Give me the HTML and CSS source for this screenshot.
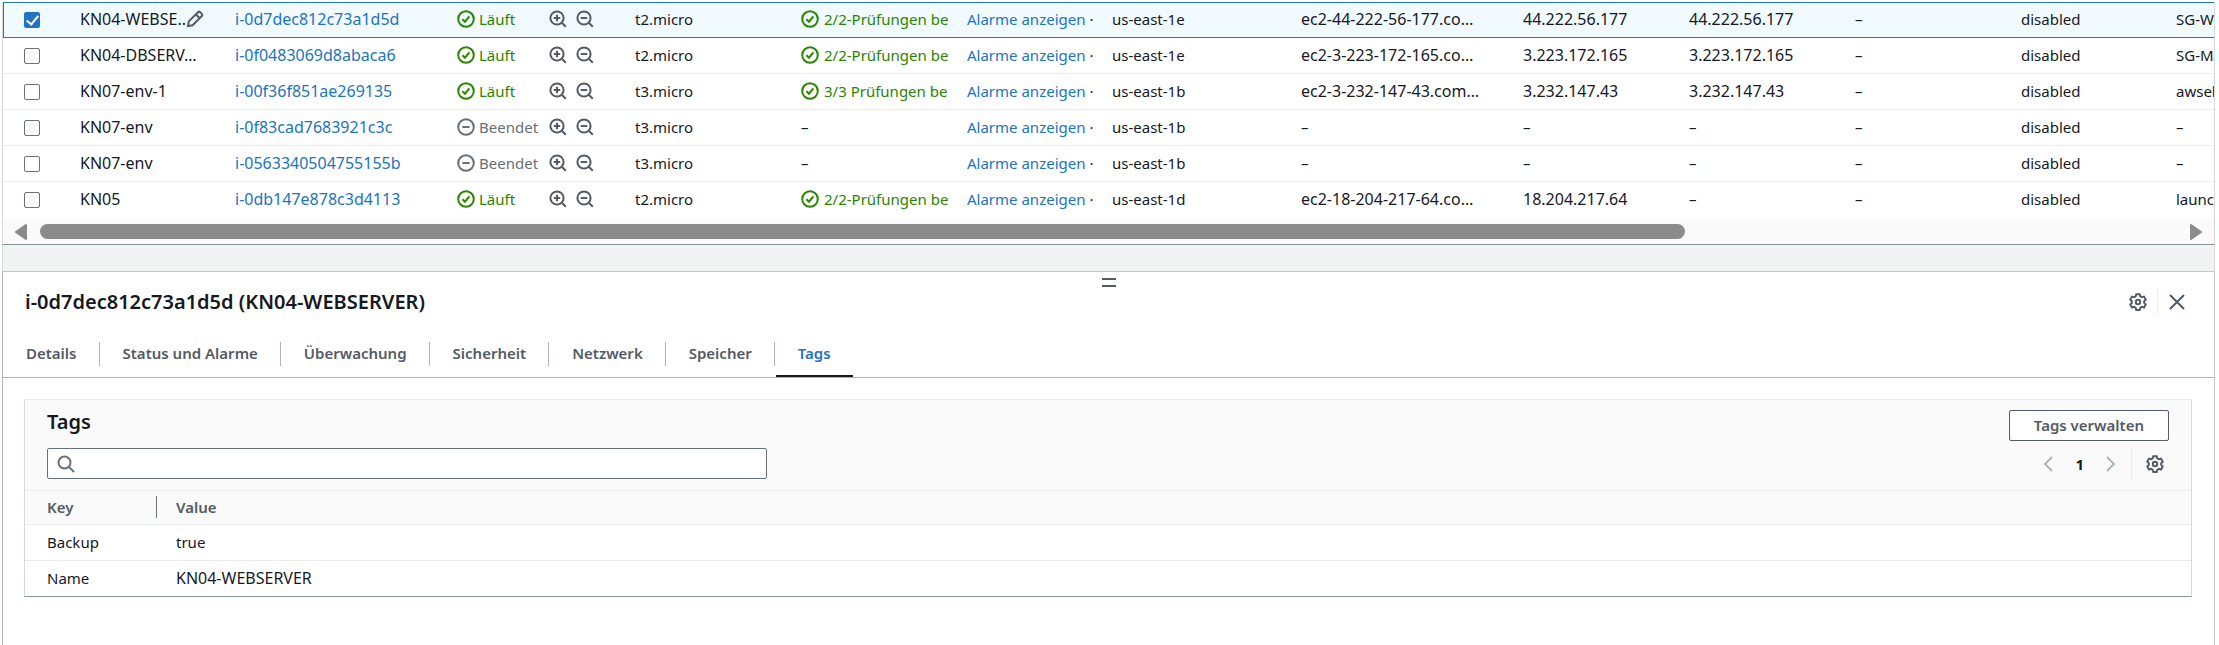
FILE: index.html
```
<!DOCTYPE html>
<html lang="de">
<head>
<meta charset="utf-8">
<title>Instances</title>
<link rel="stylesheet" href="styles.css">
</head>
<body>
<svg class="sprite" aria-hidden="true">
  <symbol id="ok" viewBox="0 0 18 18"><circle cx="9" cy="9" r="7.8"/><path d="M5.4 9.2 8 11.7l4.4-5.4"/></symbol>
  <symbol id="stop" viewBox="0 0 18 18"><circle cx="9" cy="9" r="7.8"/><path d="M5.4 9h7.2"/></symbol>
  <symbol id="zin" viewBox="0 0 18 18"><circle cx="8" cy="8" r="6.6"/><path d="m12.8 12.8 4 4M4.8 8h6.4M8 4.8v6.4"/></symbol>
  <symbol id="zout" viewBox="0 0 18 18"><circle cx="8" cy="8" r="6.6"/><path d="m12.8 12.8 4 4M4.8 8h6.4"/></symbol>
  <symbol id="pen" viewBox="0 0 18 18"><path d="M2 16l.8-4.600L12 2.200c.6-.6 1.500-.6 2.100 0l1.700 1.700c.6.6.6 1.500 0 2.100L6.600 15.200zM10 4.500l3.700 3.700"/></symbol>
  <symbol id="search" viewBox="0 0 18 18"><circle cx="7.500" cy="7.500" r="6"/><path d="m12 12 5 5"/></symbol>
  <symbol id="gear" viewBox="0 0 18 18"><path d="M7.300 1.200h3.400l.6 2.100 1.500.9 2.200-.6 1.700 3-1.500 1.600v1.700l1.500 1.600-1.700 3-2.200-.6-1.500.9-.6 2.100H7.300l-.6-2.100-1.500-.9-2.200.6-1.700-3 1.500-1.600V8.200L1.300 6.600l1.700-3 2.200.6 1.500-.9z"/><circle cx="9" cy="9" r="2.200"/></symbol>
  <symbol id="close" viewBox="0 0 18 18"><path d="M2 2l14 14M16 2 2 16"/></symbol>
  <symbol id="prev" viewBox="0 0 18 18"><path d="M13 2 6 9l7 7"/></symbol>
  <symbol id="next" viewBox="0 0 18 18"><path d="m5 2 7 7-7 7"/></symbol>
</svg>
<main class="frame">
  <section class="instances">
    <div class="viewport">
      <table class="grid">
        <colgroup><col class="w-check"><col class="w-name"><col class="w-long"><col class="w-state"><col class="w-std"><col class="w-std"><col class="w-alarm"><col class="w-zone"><col class="w-long"><col class="w-std"><col class="w-std"><col class="w-std"><col class="w-name"><col class="w-group"></colgroup>
        <tbody>
          <tr class="selected">
            <td><input type="checkbox" checked aria-label="KN04-WEBSERVER"></td>
            <td class="code"><span class="editable">KN04-WEBSE..<svg class="icon muted"><use href="#pen"/></svg></span></td>
            <td class="code"><a href="#">i-0d7dec812c73a1d5d</a></td>
            <td><span class="state"><span class="label good"><svg class="icon"><use href="#ok"/></svg>Läuft</span><button aria-label="Filter ein"><svg class="icon"><use href="#zin"/></svg></button><button aria-label="Filter aus"><svg class="icon"><use href="#zout"/></svg></button></span></td>
            <td>t2.micro</td>
            <td><span class="label good"><svg class="icon"><use href="#ok"/></svg>2/2-Prüfungen be</span></td>
            <td><a href="#">Alarme anzeigen</a> ·</td>
            <td>us-east-1e</td>
            <td class="code">ec2-44-222-56-177.co…</td>
            <td class="code">44.222.56.177</td>
            <td class="code">44.222.56.177</td>
            <td>–</td><td>disabled</td><td>SG-W</td>
          </tr>
          <tr>
            <td><input type="checkbox" aria-label="KN04-DBSERVER"></td>
            <td class="code">KN04-DBSERV…</td>
            <td class="code"><a href="#">i-0f0483069d8abaca6</a></td>
            <td><span class="state"><span class="label good"><svg class="icon"><use href="#ok"/></svg>Läuft</span><button aria-label="Filter ein"><svg class="icon"><use href="#zin"/></svg></button><button aria-label="Filter aus"><svg class="icon"><use href="#zout"/></svg></button></span></td>
            <td>t2.micro</td>
            <td><span class="label good"><svg class="icon"><use href="#ok"/></svg>2/2-Prüfungen be</span></td>
            <td><a href="#">Alarme anzeigen</a> ·</td>
            <td>us-east-1e</td>
            <td class="code">ec2-3-223-172-165.co…</td>
            <td class="code">3.223.172.165</td>
            <td class="code">3.223.172.165</td>
            <td>–</td><td>disabled</td><td>SG-M</td>
          </tr>
          <tr>
            <td><input type="checkbox" aria-label="KN07-env-1"></td>
            <td class="code">KN07-env-1</td>
            <td class="code"><a href="#">i-00f36f851ae269135</a></td>
            <td><span class="state"><span class="label good"><svg class="icon"><use href="#ok"/></svg>Läuft</span><button aria-label="Filter ein"><svg class="icon"><use href="#zin"/></svg></button><button aria-label="Filter aus"><svg class="icon"><use href="#zout"/></svg></button></span></td>
            <td>t3.micro</td>
            <td><span class="label good"><svg class="icon"><use href="#ok"/></svg>3/3 Prüfungen be</span></td>
            <td><a href="#">Alarme anzeigen</a> ·</td>
            <td>us-east-1b</td>
            <td class="code">ec2-3-232-147-43.com…</td>
            <td class="code">3.232.147.43</td>
            <td class="code">3.232.147.43</td>
            <td>–</td><td>disabled</td><td>awseb</td>
          </tr>
          <tr>
            <td><input type="checkbox" aria-label="KN07-env"></td>
            <td class="code">KN07-env</td>
            <td class="code"><a href="#">i-0f83cad7683921c3c</a></td>
            <td><span class="state"><span class="label ended"><svg class="icon"><use href="#stop"/></svg>Beendet</span><button aria-label="Filter ein"><svg class="icon"><use href="#zin"/></svg></button><button aria-label="Filter aus"><svg class="icon"><use href="#zout"/></svg></button></span></td>
            <td>t3.micro</td>
            <td>–</td>
            <td><a href="#">Alarme anzeigen</a> ·</td>
            <td>us-east-1b</td>
            <td>–</td><td>–</td><td>–</td>
            <td>–</td><td>disabled</td><td>–</td>
          </tr>
          <tr>
            <td><input type="checkbox" aria-label="KN07-env"></td>
            <td class="code">KN07-env</td>
            <td class="code"><a href="#">i-0563340504755155b</a></td>
            <td><span class="state"><span class="label ended"><svg class="icon"><use href="#stop"/></svg>Beendet</span><button aria-label="Filter ein"><svg class="icon"><use href="#zin"/></svg></button><button aria-label="Filter aus"><svg class="icon"><use href="#zout"/></svg></button></span></td>
            <td>t3.micro</td>
            <td>–</td>
            <td><a href="#">Alarme anzeigen</a> ·</td>
            <td>us-east-1b</td>
            <td>–</td><td>–</td><td>–</td>
            <td>–</td><td>disabled</td><td>–</td>
          </tr>
          <tr>
            <td><input type="checkbox" aria-label="KN05"></td>
            <td class="code">KN05</td>
            <td class="code"><a href="#">i-0db147e878c3d4113</a></td>
            <td><span class="state"><span class="label good"><svg class="icon"><use href="#ok"/></svg>Läuft</span><button aria-label="Filter ein"><svg class="icon"><use href="#zin"/></svg></button><button aria-label="Filter aus"><svg class="icon"><use href="#zout"/></svg></button></span></td>
            <td>t2.micro</td>
            <td><span class="label good"><svg class="icon"><use href="#ok"/></svg>2/2-Prüfungen be</span></td>
            <td><a href="#">Alarme anzeigen</a> ·</td>
            <td>us-east-1d</td>
            <td class="code">ec2-18-204-217-64.co…</td>
            <td class="code">18.204.217.64</td>
            <td>–</td>
            <td>–</td><td>disabled</td><td>launc</td>
          </tr>
        </tbody>
      </table>
    </div>
    <div class="scrollbar">
      <svg class="arrow" viewBox="0 0 12 16"><path d="M11 1v14L1 8z"/></svg>
      <div class="track"><div class="thumb"></div></div>
      <svg class="arrow" viewBox="0 0 12 16"><path d="M1 1v14l10-7z"/></svg>
    </div>
  </section>
  <div class="gutter"></div>
  <section class="panel">
    <div class="handle"></div>
    <header class="panel-head">
      <h2>i-0d7dec812c73a1d5d (KN04-WEBSERVER)</h2>
      <div class="tools">
        <button aria-label="Einstellungen"><svg class="icon"><use href="#gear"/></svg></button>
        <span class="rule"></span>
        <button aria-label="Schließen"><svg class="icon"><use href="#close"/></svg></button>
      </div>
    </header>
    <nav class="tabs">
      <a href="#">Details</a><a href="#">Status und Alarme</a><a href="#">Überwachung</a><a href="#">Sicherheit</a><a href="#">Netzwerk</a><a href="#">Speicher</a><a href="#" class="active">Tags</a>
    </nav>
    <div class="card">
      <div class="card-head">
        <div class="line">
          <h3>Tags</h3>
          <button class="manage">Tags verwalten</button>
        </div>
        <div class="line">
          <label class="search"><svg class="icon"><use href="#search"/></svg><input type="text" aria-label="Tags suchen"></label>
          <div class="pager">
            <button class="faint" aria-label="Zurück"><svg class="icon"><use href="#prev"/></svg></button>
            <b>1</b>
            <button class="faint" aria-label="Weiter"><svg class="icon"><use href="#next"/></svg></button>
            <span class="rule"></span>
            <button aria-label="Einstellungen"><svg class="icon"><use href="#gear"/></svg></button>
          </div>
        </div>
      </div>
      <table class="tags">
        <colgroup><col class="w-key"><col></colgroup>
        <thead><tr><th><span>Key</span></th><th>Value</th></tr></thead>
        <tbody>
          <tr><td>Backup</td><td>true</td></tr>
          <tr><td>Name</td><td class="code">KN04-WEBSERVER</td></tr>
        </tbody>
      </table>
    </div>
  </section>
</main>
</body>
</html>
```
FILE: styles.css
```
* { box-sizing: border-box; }
body {
  margin: 0;
  background: #fff;
  color: #16191f;
  font: 15px/22px "Noto Sans", "Open Sans", sans-serif;
}
.sprite { position: absolute; width: 0; height: 0; }
button { padding: 0; border: 0; background: none; font: inherit; color: #545b64; display: flex; }
a { color: #2074c0; text-decoration: none; }
h2, h3 { margin: 0; font-size: 20px; line-height: 24px; font-weight: 600; }
.icon { width: 18px; height: 18px; flex: none; fill: none; stroke: currentColor; stroke-width: 2; }
.muted { color: #545b64; }
.frame {
  min-height: 100vh;
  padding: 2px 4px 0 2px;
  display: flex;
  flex-direction: column;
}
.instances {
  border: 1px solid #d5dbdb;
  border-top: 0;
  border-bottom-color: #879596;
}
.viewport { overflow: hidden; padding-bottom: 1px; }
.grid { width: 2365px; table-layout: fixed; border-collapse: separate; border-spacing: 0; }
.w-check { width: 67px; }
.w-name { width: 155px; }
.w-long { width: 222px; }
.w-state { width: 178px; }
.w-std { width: 166px; }
.w-alarm { width: 145px; }
.w-zone { width: 189px; }
.w-group { width: 202px; }
.grid td {
  height: 36px;
  padding: 0 9px 2px 10px;
  border-bottom: 1px solid #eaeded;
  overflow: hidden;
  white-space: nowrap;
}
.grid tr:last-child td { border-bottom-color: transparent; }
.grid .selected td {
  background: #f1faff;
  border-top: 1px solid #2074c0;
  border-bottom-color: #2074c0;
}
.grid td:first-child { padding-left: 21px; padding-bottom: 0; }
.grid .selected td:first-child { border-left: 1px solid #2074c0; padding-left: 20px; }
.grid .code, .tags .code { font-size: 16px; }
.grid input {
  appearance: none;
  display: block;
  width: 16px;
  height: 16px;
  margin: 0;
  border: 1px solid #687078;
  border-radius: 2px;
  background: #fff;
}
.grid input:checked {
  border-color: #2074c0;
  background: #2074c0;
}
.grid input:checked::after {
  content: "";
  display: block;
  width: 5px;
  height: 10px;
  margin: 0 auto;
  border: solid #fff;
  border-width: 0 2px 2px 0;
  transform: rotate(40deg);
}
.editable, .label, .state, .tools, .pager { display: flex; align-items: center; }
.label { gap: 5px; }
.state { gap: 9px; }
.state .label { width: 92px; margin-right: -9px; gap: 4px; }
.good { color: #2a8500; }
.ended { color: #687078; }
.scrollbar {
  height: 25px;
  padding: 0 12px;
  background: #fafafa;
  display: flex;
  align-items: center;
  gap: 13px;
}
.arrow { width: 12px; height: 16px; fill: #8b8b8b; stroke: #8b8b8b; stroke-linejoin: round; stroke-width: 2; }
.track { flex: 1; }
.thumb { width: 77%; height: 15px; border-radius: 8px; background: #8b8b8b; }
.gutter {
  height: 26px;
  background: #f2f3f3;
  border: solid #d5dbdb;
  border-width: 0 1px;
}
.panel {
  flex: 1;
  border: 1px solid #c6c6cd;
  border-left-color: #aab7b8;
  border-bottom: 0;
  padding-top: 6px;
}
.handle { width: 14px; height: 9px; margin: 0 auto; border: solid #545b64; border-width: 2px 0; }
.panel-head { display: flex; justify-content: space-between; align-items: center; padding: 0 28px 1px 22px; height: 30px; }
.tools { gap: 10px; }
.rule { width: 1px; height: 26px; background: #eaeded; }
.tabs { display: flex; height: 61px; padding-top: 25px; border-bottom: 1px solid #aab7b8; }
.tabs a {
  color: #545b64;
  font-weight: 600;
  padding: 0 22px 0 23px;
  height: 24px;
  border-left: 1px solid #aab7b8;
}
.tabs a:first-child { border-left-color: transparent; padding-left: 22px; }
.tabs .active {
  position: relative;
  color: #2074c0;
}
.tabs .active::after {
  content: "";
  position: absolute;
  left: 1px;
  right: 0;
  bottom: -11px;
  height: 2px;
  background: #16191f;
}
.card {
  margin: 21px 22px 0 21px;
  border: 1px solid #d5dbdb;
  border-top-color: #eaeded;
  border-bottom-color: #879596;
}
.card-head { background: #fafafa; padding: 10px 22px 11px; display: grid; gap: 7px; }
.line { display: flex; justify-content: space-between; align-items: center; }
.line h3 { align-self: flex-start; }
.manage {
  height: 31px;
  padding: 0 24px 1px;
  align-items: center;
  border: 1px solid #545b64;
  border-radius: 2px;
  background: #fff;
  font-weight: 600;
}
.search {
  width: 720px;
  max-width: 60%;
  height: 31px;
  padding: 0 9px;
  display: flex;
  align-items: center;
  gap: 8px;
  border: 1px solid #687078;
  border-radius: 2px;
  background: #fff;
  color: #687078;
}
.search input { flex: 1; border: 0; outline: 0; font: inherit; background: none; }
.pager { gap: 18px; padding-right: 5px; }
.pager .rule { height: 31px; margin: 0 -4px 0 -7px; }
.faint { color: #aab7b8; }
.tags { width: 100%; table-layout: fixed; border-collapse: separate; border-spacing: 0; text-align: left; }
.w-key { width: 132px; }
.tags th, .tags td { padding: 0 19px 2px; height: 36px; border-top: 1px solid #eaeded; white-space: nowrap; }
.tags th { height: 34px; background: #fafafa; color: #545b64; font-weight: 600; }
.tags th:first-child, .tags td:first-child { padding: 0 0 2px 22px; }
.tags th span { display: block; border-right: 1px solid #687078; }
```
